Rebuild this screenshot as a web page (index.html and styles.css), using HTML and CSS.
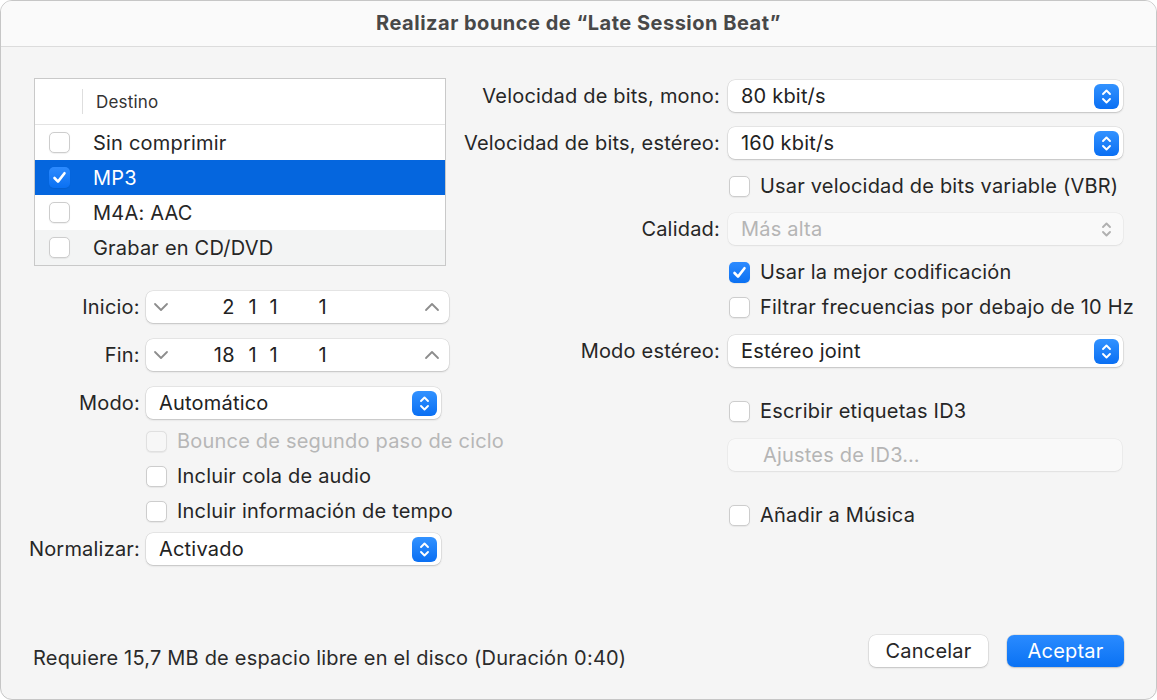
FILE: index.html
```html
<!DOCTYPE html>
<html lang="es">
<head>
  <meta charset="UTF-8" />
  <meta name="viewport" content="width=device-width, initial-scale=1.0" />
  <title>Realizar bounce</title>
  <link rel="stylesheet" href="styles.css">
</head>
<body>
  <div class="dialog">
    <div class="titlebar">Realizar bounce de “Late Session Beat”</div>

    <div class="content">
      <!-- left column -->
      <div class="col-left">
        <div class="dest-table">
          <div class="dest-head"><span class="head-sep"></span>Destino</div>
          <div class="dest-row"><span class="cb"></span>Sin comprimir</div>
          <div class="dest-row selected"><span class="cb on"><svg viewBox="0 0 21 21"><path d="M5.5 11 L9 14.6 L15.5 6.2"/></svg></span>MP3</div>
          <div class="dest-row"><span class="cb"></span>M4A: AAC</div>
          <div class="dest-row alt"><span class="cb"></span>Grabar en CD/DVD</div>
        </div>

        <div class="row mt-25">
          <label class="lbl lbl-left">Inicio:</label>
          <div class="field stepper">
            <svg class="chev" viewBox="0 0 16 10"><path d="M2 2 L8 8 L14 2"/></svg>
            <div class="pos"><span class="p1">2</span><span class="p2">1</span><span class="p3">1</span><span class="p4">1</span></div>
            <svg class="chev up" viewBox="0 0 16 10"><path d="M2 8 L8 2 L14 8"/></svg>
          </div>
        </div>
        <div class="row mt-16">
          <label class="lbl lbl-left">Fin:</label>
          <div class="field stepper">
            <svg class="chev" viewBox="0 0 16 10"><path d="M2 2 L8 8 L14 2"/></svg>
            <div class="pos"><span class="p1">18</span><span class="p2">1</span><span class="p3">1</span><span class="p4">1</span></div>
            <svg class="chev up" viewBox="0 0 16 10"><path d="M2 8 L8 2 L14 8"/></svg>
          </div>
        </div>
        <div class="row mt-16">
          <label class="lbl lbl-left">Modo:</label>
          <div class="field popup popup-left">
            <span class="val">Automático</span>
            <span class="arrows"><svg viewBox="0 0 25 25"><path d="M9 10 L12.5 6.5 L16 10 M9 15 L12.5 18.5 L16 15"/></svg></span>
          </div>
        </div>
        <div class="row mt-11 indent">
          <span class="cb disabled"></span><span class="cb-text dim">Bounce de segundo paso de ciclo</span>
        </div>
        <div class="row mt-13 indent">
          <span class="cb"></span><span class="cb-text">Incluir cola de audio</span>
        </div>
        <div class="row mt-13 indent">
          <span class="cb"></span><span class="cb-text">Incluir información de tempo</span>
        </div>
        <div class="row mt-11">
          <label class="lbl lbl-left">Normalizar:</label>
          <div class="field popup popup-left">
            <span class="val">Activado</span>
            <span class="arrows"><svg viewBox="0 0 25 25"><path d="M9 10 L12.5 6.5 L16 10 M9 15 L12.5 18.5 L16 15"/></svg></span>
          </div>
        </div>
      </div>

      <!-- right column -->
      <div class="col-right">
        <div class="row">
          <label class="lbl lbl-right">Velocidad de bits, mono:</label>
          <div class="field popup popup-right">
            <span class="val">80 kbit/s</span>
            <span class="arrows"><svg viewBox="0 0 25 25"><path d="M9 10 L12.5 6.5 L16 10 M9 15 L12.5 18.5 L16 15"/></svg></span>
          </div>
        </div>
        <div class="row mt-15">
          <label class="lbl lbl-right">Velocidad de bits, estéreo:</label>
          <div class="field popup popup-right">
            <span class="val">160 kbit/s</span>
            <span class="arrows"><svg viewBox="0 0 25 25"><path d="M9 10 L12.5 6.5 L16 10 M9 15 L12.5 18.5 L16 15"/></svg></span>
          </div>
        </div>
        <div class="row mt-16 indent-r">
          <span class="cb"></span><span class="cb-text">Usar velocidad de bits variable (VBR)</span>
        </div>
        <div class="row mt-16">
          <label class="lbl lbl-right">Calidad:</label>
          <div class="field popup popup-right off">
            <span class="val">Más alta</span>
            <span class="arrows"><svg viewBox="0 0 25 25"><path d="M9 10 L12.5 6.5 L16 10 M9 15 L12.5 18.5 L16 15"/></svg></span>
          </div>
        </div>
        <div class="row mt-16 indent-r">
          <span class="cb on"><svg viewBox="0 0 21 21"><path d="M5.5 11 L9 14.6 L15.5 6.2"/></svg></span><span class="cb-text">Usar la mejor codificación</span>
        </div>
        <div class="row mt-13 indent-r">
          <span class="cb"></span><span class="cb-text">Filtrar frecuencias por debajo de 10 Hz</span>
        </div>
        <div class="row mt-17">
          <label class="lbl lbl-right">Modo estéreo:</label>
          <div class="field popup popup-right">
            <span class="val">Estéreo joint</span>
            <span class="arrows"><svg viewBox="0 0 25 25"><path d="M9 10 L12.5 6.5 L16 10 M9 15 L12.5 18.5 L16 15"/></svg></span>
          </div>
        </div>
        <div class="row mt-33 indent-r">
          <span class="cb"></span><span class="cb-text">Escribir etiquetas ID3</span>
        </div>
        <div class="row mt-17 indent-r">
          <div class="field id3-btn">Ajustes de ID3…</div>
        </div>
        <div class="row mt-33 indent-r">
          <span class="cb"></span><span class="cb-text">Añadir a Música</span>
        </div>
      </div>
    </div>

    <div class="footer">
      <span class="disk-info">Requiere 15,7 MB de espacio libre en el disco (Duración 0:40)</span>
      <button class="btn">Cancelar</button>
      <button class="btn primary">Aceptar</button>
    </div>
  </div>
</body>
</html>
```

FILE: styles.css
```css
html, body {
  margin: 0;
  padding: 0;
  background: #ffffff;
}
body {
  font-family: Inter, "Noto Sans", sans-serif;
  font-size: 20px;
  line-height: 22px;
  letter-spacing: 0.2px;
  color: #262626;
}
.dialog {
  width: 1157px;
  height: 700px;
  box-sizing: border-box;
  border: 1px solid #c6c6c6;
  border-radius: 12px;
  background: #f5f5f5;
  overflow: hidden;
  display: flex;
  flex-direction: column;
}
.titlebar {
  height: 45px;
  line-height: 44px;
  text-align: center;
  font-weight: 700;
  letter-spacing: 0.5px;
  color: #484848;
  background: #fafafa;
  border-bottom: 1px solid #dcdcdc;
}
.content {
  flex: 1;
  display: flex;
  gap: 7px;
  padding: 31px 0 0 26px;
}
.col-left {
  width: 422px;
}
.col-right {
  width: 668px;
  padding-top: 2px;
}

/* destination table */
.dest-table {
  margin-left: 7px;
  width: 412px;
  box-sizing: border-box;
  border: 1px solid #c9c9c9;
  background: #fff;
}
.dest-head {
  height: 45px;
  display: flex;
  align-items: center;
  font-size: 17px;
  color: #333;
  border-bottom: 1px solid #e3e3e3;
}
.head-sep {
  width: 1px;
  height: 25px;
  background: #dedede;
  margin: 0 13px 0 47px;
}
.dest-row {
  height: 35px;
  display: flex;
  align-items: center;
  padding-left: 14px;
  gap: 23px;
}
.dest-row.selected {
  background: #0566de;
  color: #fff;
}
.dest-row.alt {
  background: #f3f4f4;
}

/* checkbox */
.cb {
  width: 21px;
  height: 21px;
  box-sizing: border-box;
  flex: none;
  border-radius: 5px;
  background: #fff;
  border: 1px solid #cdcdcd;
  box-shadow: 0 0.5px 1px rgba(0,0,0,0.06);
  display: inline-flex;
}
.cb.on {
  border: none;
  background: linear-gradient(#2d8bff, #0a70f2);
}
.cb.on svg {
  width: 21px;
  height: 21px;
}
.cb.on path {
  fill: none;
  stroke: #fff;
  stroke-width: 2.6;
  stroke-linecap: round;
  stroke-linejoin: round;
}
.cb.disabled {
  background: #f7f7f7;
  border-color: #e0e0e0;
}
.cb-text {
  margin-left: 10px;
  white-space: nowrap;
}
.dim {
  color: #b7b7b7;
}

/* form rows */
.row {
  display: flex;
  align-items: center;
}
.mt-11 { margin-top: 11px; }
.mt-13 { margin-top: 13px; }
.mt-15 { margin-top: 15px; }
.mt-16 { margin-top: 16px; }
.mt-17 { margin-top: 17px; }
.mt-25 { margin-top: 25px; }
.mt-33 { margin-top: 33px; }
.lbl {
  text-align: right;
  white-space: nowrap;
}
.lbl-left {
  width: 113px;
  margin-right: 6px;
}
.lbl-right {
  width: 264px;
  margin-right: 8px;
}
.indent {
  padding-left: 119px;
}
.indent-r {
  padding-left: 273px;
}
.field {
  height: 32px;
  box-sizing: border-box;
  background: #fff;
  border-radius: 7px;
  box-shadow: 0 0 0 0.5px rgba(0,0,0,0.12), 0 1px 2px rgba(0,0,0,0.16);
  display: flex;
  align-items: center;
}

/* position steppers */
.stepper {
  width: 304px;
  padding: 0 9px 0 7px;
}
.chev {
  width: 16px;
  height: 10px;
  flex: none;
}
.chev path {
  fill: none;
  stroke: #8d8d8d;
  stroke-width: 1.8;
  stroke-linecap: round;
  stroke-linejoin: round;
}
.chev.up {
  margin-left: auto;
}
.pos {
  display: flex;
  color: #222;
}
.pos span {
  text-align: right;
}
.pos .p1 { width: 66px; }
.pos .p2 { width: 22px; }
.pos .p3 { width: 21px; }
.pos .p4 { width: 49px; }

/* popup buttons */
.popup {
  padding: 0 4px 0 13px;
}
.popup-left {
  width: 295px;
}
.popup-right {
  width: 395px;
}
.popup .val {
  flex: 1;
  color: #222;
}
.arrows {
  width: 25px;
  height: 25px;
  border-radius: 6px;
  background: linear-gradient(#3292ff, #0a6ff3);
  display: flex;
}
.arrows svg {
  width: 25px;
  height: 25px;
}
.arrows path {
  fill: none;
  stroke: #fff;
  stroke-width: 1.9;
  stroke-linecap: round;
  stroke-linejoin: round;
}
.popup.off {
  background: #f9f9f9;
  box-shadow: 0 0 0 0.5px rgba(0,0,0,0.06), 0 1px 2px rgba(0,0,0,0.06);
}
.popup.off .val {
  color: #b5b5b5;
}
.popup.off .arrows {
  background: none;
}
.popup.off .arrows path {
  stroke: #b0b0b0;
}
.id3-btn {
  width: 394px;
  margin-left: -1px;
  padding-left: 35px;
  color: #b5b5b5;
  background: #f9f9f9;
  box-shadow: 0 0 0 0.5px rgba(0,0,0,0.06), 0 1px 2px rgba(0,0,0,0.06);
}

/* footer */
.footer {
  display: flex;
  align-items: center;
  padding: 0 32px 30px 32px;
}
.disk-info {
  flex: 1;
  padding-top: 14px;
  color: #2a2a2a;
}
.btn {
  font-family: inherit;
  font-size: 20px;
  letter-spacing: 0.2px;
  height: 32px;
  border: none;
  border-radius: 7px;
  background: #fff;
  color: #262626;
  box-shadow: 0 0 0 0.5px rgba(0,0,0,0.12), 0 1px 2px rgba(0,0,0,0.16);
  width: 119px;
  padding: 0;
}
.btn.primary {
  width: 117px;
  margin-left: 19px;
  color: #fff;
  background: linear-gradient(#2a8bff, #0a72f4);
}
```
